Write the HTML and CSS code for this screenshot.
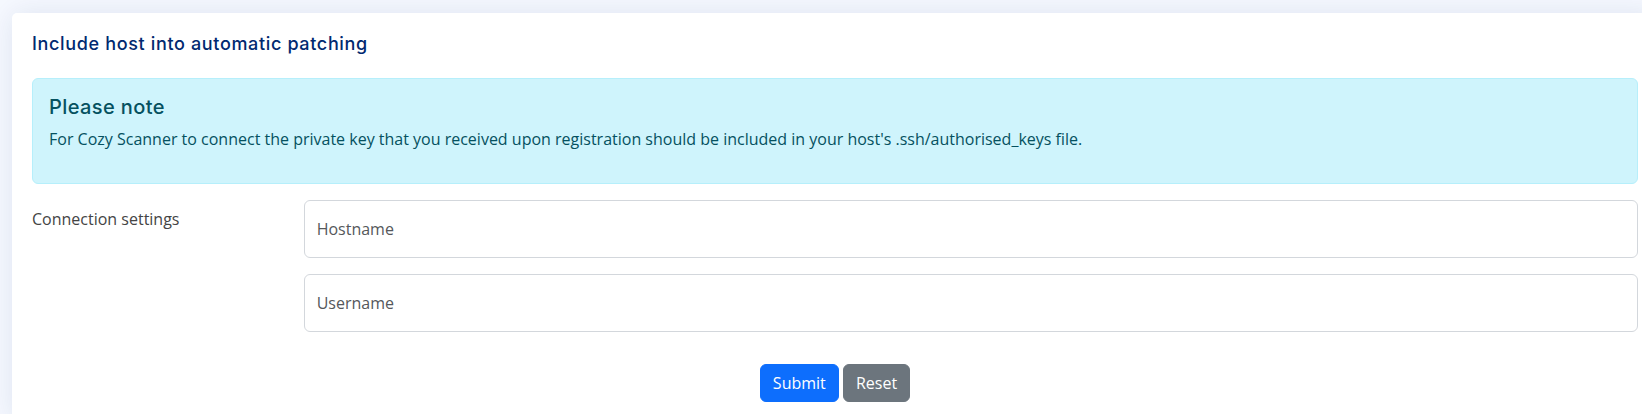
FILE: index.html
```html
<!DOCTYPE html>
<html lang="en">
<head>
<meta charset="utf-8">
<title>Include host into automatic patching</title>
<link rel="stylesheet" href="styles.css">
</head>
<body>
<main class="page">
  <section class="card">
    <div class="card-body">
      <h5 class="card-title">Include host into automatic patching</h5>
      <div class="alert">
        <h4 class="alert-heading">Please note</h4>
        <p class="alert-text">For Cozy Scanner to connect the private key that you received upon registration should be included in your host's .ssh/authorised_keys file.</p>
      </div>
      <form class="form">
        <div class="form-row">
          <label class="row-label" for="hostname">Connection settings</label>
          <div class="row-fields">
            <input class="field" id="hostname" type="text" placeholder="Hostname">
            <input class="field" id="username" type="text" placeholder="Username">
          </div>
        </div>
        <div class="actions">
          <button type="submit" class="btn btn-primary">Submit</button>
          <button type="reset" class="btn btn-secondary">Reset</button>
        </div>
      </form>
    </div>
  </section>
</main>
</body>
</html>
```

FILE: styles.css
```css
* { box-sizing: border-box; }
html, body { margin: 0; padding: 0; overflow: hidden; }
body {
  background: #f6f9ff;
  font-family: "Open Sans", "Noto Sans", sans-serif;
  font-size: 16px;
  line-height: 1.5;
  color: #444444;
  width: 1642px;
  height: 414px;
}
.page {
  padding: 13px 0 0 12px;
}
.card {
  width: 1646px;
  background: #fff;
  border-radius: 5px;
  box-shadow: 0 0 30px rgba(1, 41, 112, 0.1);
}
.card-body {
  padding: 0 20px 20px 20px;
}
.card-title {
  margin: 0 0 8px 0;
  padding: 20px 0 15px 0;
  font-family: "Inter", "Lato", sans-serif;
  font-size: 18px;
  font-weight: 500;
  line-height: 1.2;
  letter-spacing: 0.65px;
  color: #012970;
}
.alert {
  margin: 0 0 16px 0;
  padding: 16px;
  border: 1px solid #b6effb;
  border-radius: 6px;
  background: #cff4fc;
  color: #055160;
}
.alert-heading {
  margin: 0 0 8px 0;
  font-family: "Inter", "Lato", sans-serif;
  font-size: 20px;
  font-weight: 500;
  line-height: 1.2;
  letter-spacing: 0.4px;
  color: #055160;
}
.alert-text {
  margin: 0 0 16px 0;
}
.form { margin: 0; }
.form-row {
  display: flex;
  gap: 24px;
  margin-bottom: 16px;
}
.row-label {
  flex: 0 0 calc((100% + 24px) / 6 - 24px);
  padding-top: 7px;
  color: #444444;
}
.row-fields {
  flex: 1 1 auto;
  display: flex;
  flex-direction: column;
  gap: 16px;
  padding-bottom: 16px;
}
.field {
  display: block;
  width: 100%;
  height: 58px;
  margin: 0;
  padding: 16px 12px;
  font-family: "Open Sans", "Noto Sans", sans-serif;
  font-size: 16px;
  line-height: 1.5;
  color: #212529;
  background: #fff;
  border: 1px solid #d3d7dc;
  border-radius: 6px;
  outline: none;
}
.field::placeholder {
  color: #55585b;
  opacity: 1;
}
.actions {
  text-align: center;
}
.btn {
  display: inline-block;
  height: 38px;
  padding: 6px 12px;
  font-family: "Open Sans", "Noto Sans", sans-serif;
  font-size: 16px;
  line-height: 1.5;
  color: #fff;
  border: 1px solid transparent;
  border-radius: 6px;
  vertical-align: middle;
  cursor: pointer;
}
.btn-primary { background: #0d6efd; border-color: #0d6efd; }
.btn-secondary { background: #6c757d; border-color: #6c757d; }
```
